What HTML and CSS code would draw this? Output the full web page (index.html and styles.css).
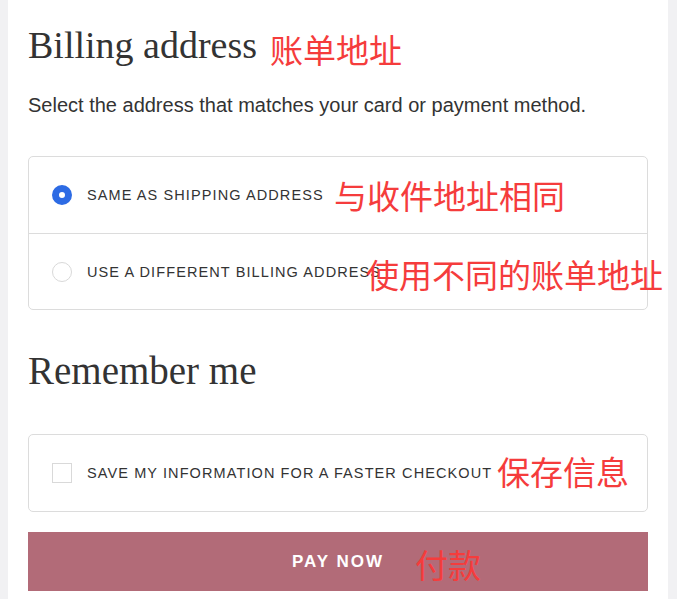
FILE: index.html
```html
<!DOCTYPE html>
<html>
<head>
<meta charset="utf-8">
<link rel="stylesheet" href="styles.css">
</head>
<body>
<div class="page">
  <main class="main">
    <h2 class="heading h-billing">Billing address</h2>
    <p class="sub">Select the address that matches your card or payment method.</p>
    <div class="card">
      <label class="row">
        <span class="radio checked"></span>
        <span class="label">SAME AS SHIPPING ADDRESS</span>
      </label>
      <label class="row divided">
        <span class="radio"></span>
        <span class="label">USE A DIFFERENT BILLING ADDRESS</span>
      </label>
    </div>
    <h2 class="heading h-remember">Remember me</h2>
    <div class="card card-remember">
      <label class="row">
        <span class="check"></span>
        <span class="label">SAVE MY INFORMATION FOR A FASTER CHECKOUT</span>
      </label>
    </div>
    <button class="pay">PAY NOW</button>

    <span class="note n1">账单地址</span>
    <span class="note n2">与收件地址相同</span>
    <span class="note n3">使用不同的账单地址</span>
    <span class="note n4">保存信息</span>
    <span class="note n5">付款</span>
  </main>
</div>
</body>
</html>
```
FILE: styles.css
```css
* { box-sizing: border-box; }
html, body { margin: 0; padding: 0; }
body {
  background: #f1f1f3;
  font-family: "Liberation Sans", Arial, sans-serif;
  color: #333;
}
.page {
  width: 677px;
  height: 599px;
  overflow: hidden;
}
.main {
  position: relative;
  margin-left: 8px;
  width: 660px;
  height: 599px;
  background: #fff;
  padding: 0 20px;
}
.heading {
  margin: 0;
  font-family: "Liberation Serif", "Times New Roman", serif;
  font-weight: normal;
  font-size: 38px;
  color: #333;
  line-height: 40px;
}
.h-billing { padding-top: 25px; }
.h-remember { font-size: 39px; }
.sub {
  margin: 28px 0 0;
  font-size: 20px;
  line-height: 24px;
  color: #333;
}
.card {
  margin-top: 39px;
  border: 1px solid #dcdcdc;
  border-radius: 5px;
}
.row {
  display: flex;
  align-items: center;
  height: 76px;
  padding-left: 23px;
  gap: 15px;
}
.divided { border-top: 1px solid #dcdcdc; }
.radio {
  width: 20px;
  height: 20px;
  border-radius: 50%;
  border: 1px solid #d9d9d9;
  flex: none;
}
.radio.checked {
  border: 7px solid #2d6be4;
}
.check {
  width: 20px;
  height: 20px;
  border: 1px solid #d9d9d9;
  flex: none;
}
.label {
  font-size: 14.5px;
  letter-spacing: 1.1px;
  color: #333;
}
.h-remember { margin-top: 41px; }
.card-remember { margin-top: 43px; }
.pay {
  display: block;
  width: 620px;
  height: 59px;
  margin-top: 20px;
  border: 0;
  background: #b26b78;
  color: #fff;
  font-family: "Liberation Sans", Arial, sans-serif;
  font-weight: bold;
  font-size: 17px;
  letter-spacing: 2px;
}
.note {
  position: absolute;
  font-family: "Noto Sans CJK SC", sans-serif;
  font-size: 33px;
  line-height: 1;
  color: #f53c3c;
  white-space: nowrap;
}
.n1 { left: 262px; top: 33px; }
.n2 { left: 326px; top: 179px; }
.n3 { left: 358px; top: 258px; }
.n4 { left: 489px; top: 455px; }
.n5 { left: 407px; top: 548px; }
```
